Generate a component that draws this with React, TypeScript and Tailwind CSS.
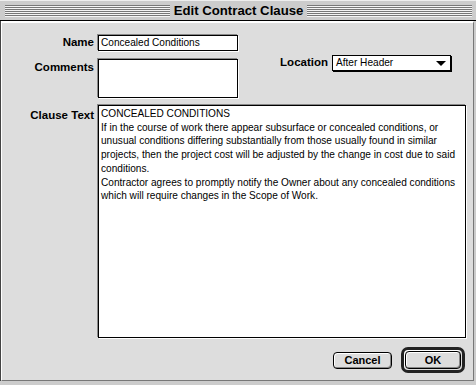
import React from 'react';

const clauseLines = [
  'CONCEALED CONDITIONS',
  'If in the course of work there appear subsurface or concealed conditions, or',
  'unusual conditions differing substantially from those usually found in similar',
  'projects, then the project cost will be adjusted by the change in cost due to said',
  'conditions.',
  'Contractor agrees to promptly notify the Owner about any concealed conditions',
  'which will require changes in the Scope of Work.',
];

const labelCls = "text-right text-[11.5px] font-bold leading-none text-black [font-family:'Liberation_Sans',Arial,sans-serif]";
const fieldCls =
  "border border-black bg-white shadow-[-1px_-1px_0_#888,1px_1px_0_#fff] text-[10.1px] text-black [font-family:'Liberation_Sans',Arial,sans-serif]";

function Stripes() {
  return (
    <div className="h-[12px] flex-1 bg-[repeating-linear-gradient(to_bottom,#777_0px,#777_1px,#f4f4f4_1px,#f4f4f4_2px)]" />
  );
}

export default function App() {
  return (
    <div className="flex h-[385px] w-[476px] flex-col bg-[#cccccc] select-none">
      {/* title bar */}
      <div className="flex h-[20px] items-center gap-[3px] border-t border-[#eeeeee] pl-[5px] pr-[4px]">
        <Stripes />
        <span className="px-[1px] text-[13.2px] font-bold leading-none text-black [font-family:'Liberation_Sans',Arial,sans-serif]">
          Edit Contract Clause
        </span>
        <Stripes />
      </div>
      <div className="h-px bg-black" />

      {/* body */}
      <div className="mr-[2px] mb-[4px] flex flex-1 flex-col border-l border-[#444]">
        <div className="flex flex-1 flex-col border-t-2 border-l border-b border-r border-t-white border-l-white border-b-[#777] border-r-[#777] bg-[#dddddd]">
          <div className="flex items-start pt-[12px]">
            <div className="flex flex-col gap-[8px]">
              <div className="flex items-center gap-[4px]">
                <div className={`w-[92px] ${labelCls}`}>Name</div>
                <div className={`flex h-[16px] w-[140px] items-center px-[2px] ${fieldCls}`}>Concealed Conditions</div>
              </div>
              <div className="flex items-start gap-[4px]">
                <div className={`w-[92px] pt-[3px] ${labelCls}`}>Comments</div>
                <div className={`h-[39px] w-[140px] ${fieldCls}`} />
              </div>
            </div>
            <div className="ml-auto mr-[22px] mt-[20px] flex items-center gap-[4px]">
              <div className={labelCls}>Location</div>
              <div className="flex h-[16px] w-[119px] items-center justify-between border border-black bg-white pl-[3px] pr-[4px] shadow-[1px_1px_0_#000] text-[10.1px] text-black [font-family:'Liberation_Sans',Arial,sans-serif]">
                <span>After Header</span>
                <span className="h-0 w-0 border-x-[5px] border-t-[5px] border-x-transparent border-t-black" />
              </div>
            </div>
          </div>

          <div className="mt-[7px] flex items-start gap-[4px]">
            <div className={`w-[92px] pt-[5px] ${labelCls}`}>Clause Text</div>
            <div className={`h-[233px] w-[368px] px-[2px] pt-[1px] leading-[13.7px] ${fieldCls}`}>
              {clauseLines.map((line) => (
                <div key={line} className="whitespace-nowrap">
                  {line}
                </div>
              ))}
            </div>
          </div>

          <div className="mt-auto flex items-center justify-end gap-[9px] pb-[7px] pr-[8px]">
            <button className="flex h-[17px] w-[59px] items-center justify-center rounded-[4px] border border-black bg-[#dddddd] shadow-[inset_1px_1px_0_#fff,inset_-1px_-1px_0_#888] text-[11px] font-bold text-black [font-family:'Liberation_Sans',Arial,sans-serif]">
              Cancel
            </button>
            <div className="rounded-[7px] border-[3px] border-[#222] bg-[#dddddd] p-px shadow-[inset_1px_1px_0_#fff]">
              <button className="flex h-[18px] w-[56px] items-center justify-center rounded-[4px] border border-black bg-[#dddddd] shadow-[inset_1px_1px_0_#fff,inset_-1px_-1px_0_#888] text-[11px] font-bold text-black [font-family:'Liberation_Sans',Arial,sans-serif]">
                OK
              </button>
            </div>
          </div>
        </div>
      </div>
    </div>
  );
}
